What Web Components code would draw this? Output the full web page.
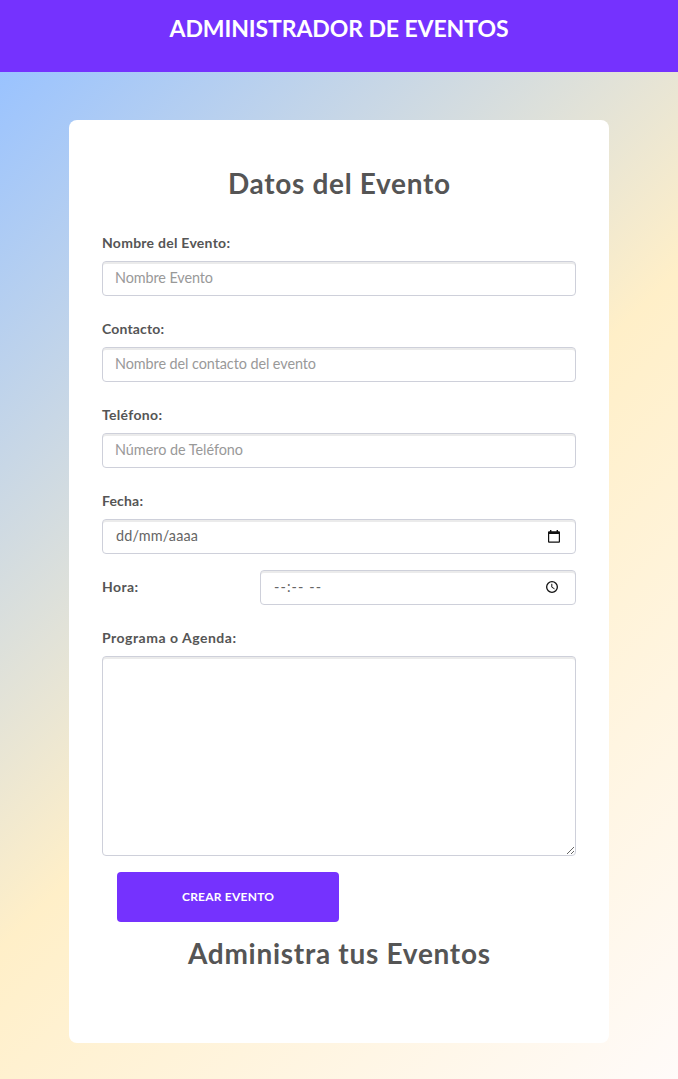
<!DOCTYPE html>
<html lang="es">
<head>
<meta charset="utf-8">
<title>Administrador de Eventos</title>
<style>
html,body{margin:0;height:100%}
body{font-family:Lato,"Open Sans",sans-serif;color:#555;overflow:hidden}
</style>
</head>
<body>
<event-app></event-app>
<script>
const define=(name,html,init)=>customElements.define(name,class extends HTMLElement{
  connectedCallback(){
    if(this.shadowRoot)return;
    this.attachShadow({mode:'open'}).innerHTML=html;
    if(init)init(this);
  }
});

// Tracks a line of text so that it spans the given width.
define('fit-text',`<style>:host{display:inline-block;white-space:pre}span{display:inline-block}</style><span><slot></slot></span>`,el=>{
  const s=el.shadowRoot.querySelector('span'),n=el.textContent.length,w=+el.getAttribute('width');
  const gap=(w-s.getBoundingClientRect().width)/(n-1);
  s.style.letterSpacing=gap+'px';
  s.style.marginRight=-gap+'px';
});

define('app-header',`<style>
:host{display:flex;justify-content:center;height:72px;box-sizing:border-box;padding-top:14px;background:#7532fe}
h1{margin:0;font-size:23px;line-height:28px;font-weight:700;color:#fff}
</style><h1><slot></slot></h1>`);

define('section-title',`<style>
:host{display:block;text-align:center}
h2{margin:0;font-size:28px;line-height:34px;font-weight:700;color:#555}
</style><h2><slot></slot></h2>`);

define('form-field',`<style>
:host{display:flex;flex-direction:column;gap:8px}
:host([inline]){display:grid;grid-template-columns:158px 1fr;gap:0;align-items:center}
label{font-size:14px;line-height:20px;font-weight:700;color:#555}
:host([inline]) label{padding-bottom:1px}
</style><label><slot name="label"></slot></label><slot></slot>`);

define('text-box',`<style>
:host{display:flex;justify-content:space-between;align-items:center;height:35px;box-sizing:border-box;padding:0 12px 1px;
border:1px solid #ced0da;border-radius:4px;background:#fff;box-shadow:inset 0 2px 0 #ebebeb;font-size:14.4px;line-height:20px;color:#999}
:host([dark]){color:#666;padding-left:13px}
</style><slot></slot><slot name="icon"></slot>`);

define('calendar-icon',`<style>:host{display:block;width:12px;height:13px;margin-right:3px}svg{display:block}</style>
<svg width="12" height="13" viewBox="0 0 12 13"><path d="M2 0h1.4v1.2h5.2V0H10v1.2h1q1 0 1 1v9.6q0 1-1 1H1q-1 0-1-1V2.2q0-1 1-1h1zM1.2 4.1v7.5h9.6V4.1z" fill="#111" fill-rule="evenodd"/></svg>`);

define('clock-icon',`<style>:host{display:block;width:12px;height:12px;margin-right:5px}svg{display:block}</style>
<svg width="12" height="12" viewBox="0 0 12 12" fill="none" stroke="#111"><circle cx="6" cy="6" r="5.35" stroke-width="1.3"/><path d="M5.8 2.8v3.4l2.7 1.6" stroke-width="1"/></svg>`);

define('text-area',`<style>
:host{display:block;height:200px}
textarea{display:block;width:100%;height:200px;box-sizing:border-box;border:1px solid #ced0da;border-radius:4px;background:#fff;
box-shadow:inset 0 2px 0 #ebebeb;resize:vertical;outline:0;padding:6px 12px;font:14.4px Lato,sans-serif;color:#666}
</style><textarea aria-label="Programa o Agenda"></textarea>`);

define('submit-button',`<style>
:host{display:block;width:222px;height:50px}
button{display:flex;align-items:center;justify-content:center;width:100%;height:100%;padding:0;border:0;border-radius:4px;background:#7532fe;color:#fff;font:700 12px/18px Lato,sans-serif}
</style><button type="button"><slot></slot></button>`);

define('form-card',`<style>
:host{display:flex;flex-direction:column;width:540px;height:923px;box-sizing:border-box;padding:46px 33px 0;background:#fff;border-radius:8px}
</style><slot></slot>`);

define('event-app',`<style>
:host{display:flex;flex-direction:column;height:1079px}
main{flex:1;display:flex;justify-content:center;align-items:flex-start;padding-top:48px;box-sizing:border-box;background:linear-gradient(135deg,#9ac3ff 0%,#ffefc8 52%,#fffbfa 101%)}
.fields{display:flex;flex-direction:column;margin-top:33px}
form-field+form-field{margin-top:23px}
form-field[inline]{margin-top:16px!important}
submit-button{margin:16px 0 0 15px}
.manage{margin-top:14px}
</style>
<app-header><fit-text width="339">ADMINISTRADOR DE EVENTOS</fit-text></app-header>
<main><form-card>
<section-title><fit-text width="222">Datos del Evento</fit-text></section-title>
<div class="fields">
<form-field><fit-text slot="label" width="128">Nombre del Evento:</fit-text><text-box><fit-text width="98">Nombre Evento</fit-text></text-box></form-field>
<form-field><fit-text slot="label" width="62">Contacto:</fit-text><text-box><fit-text width="201">Nombre del contacto del evento</fit-text></text-box></form-field>
<form-field><fit-text slot="label" width="60">Teléfono:</fit-text><text-box><fit-text width="128">Número de Teléfono</fit-text></text-box></form-field>
<form-field><fit-text slot="label" width="41">Fecha:</fit-text><text-box dark><fit-text width="82">dd/mm/aaaa</fit-text><calendar-icon slot="icon"></calendar-icon></text-box></form-field>
<form-field inline><fit-text slot="label" width="36">Hora:</fit-text><text-box dark><fit-text width="47">--:-- --</fit-text><clock-icon slot="icon"></clock-icon></text-box></form-field>
<form-field><fit-text slot="label" width="134">Programa o Agenda:</fit-text><text-area></text-area></form-field>
</div>
<submit-button><fit-text width="92">CREAR EVENTO</fit-text></submit-button>
<section-title class="manage"><fit-text width="302">Administra tus Eventos</fit-text></section-title>
</form-card></main>`);
</script>
</body>
</html>
